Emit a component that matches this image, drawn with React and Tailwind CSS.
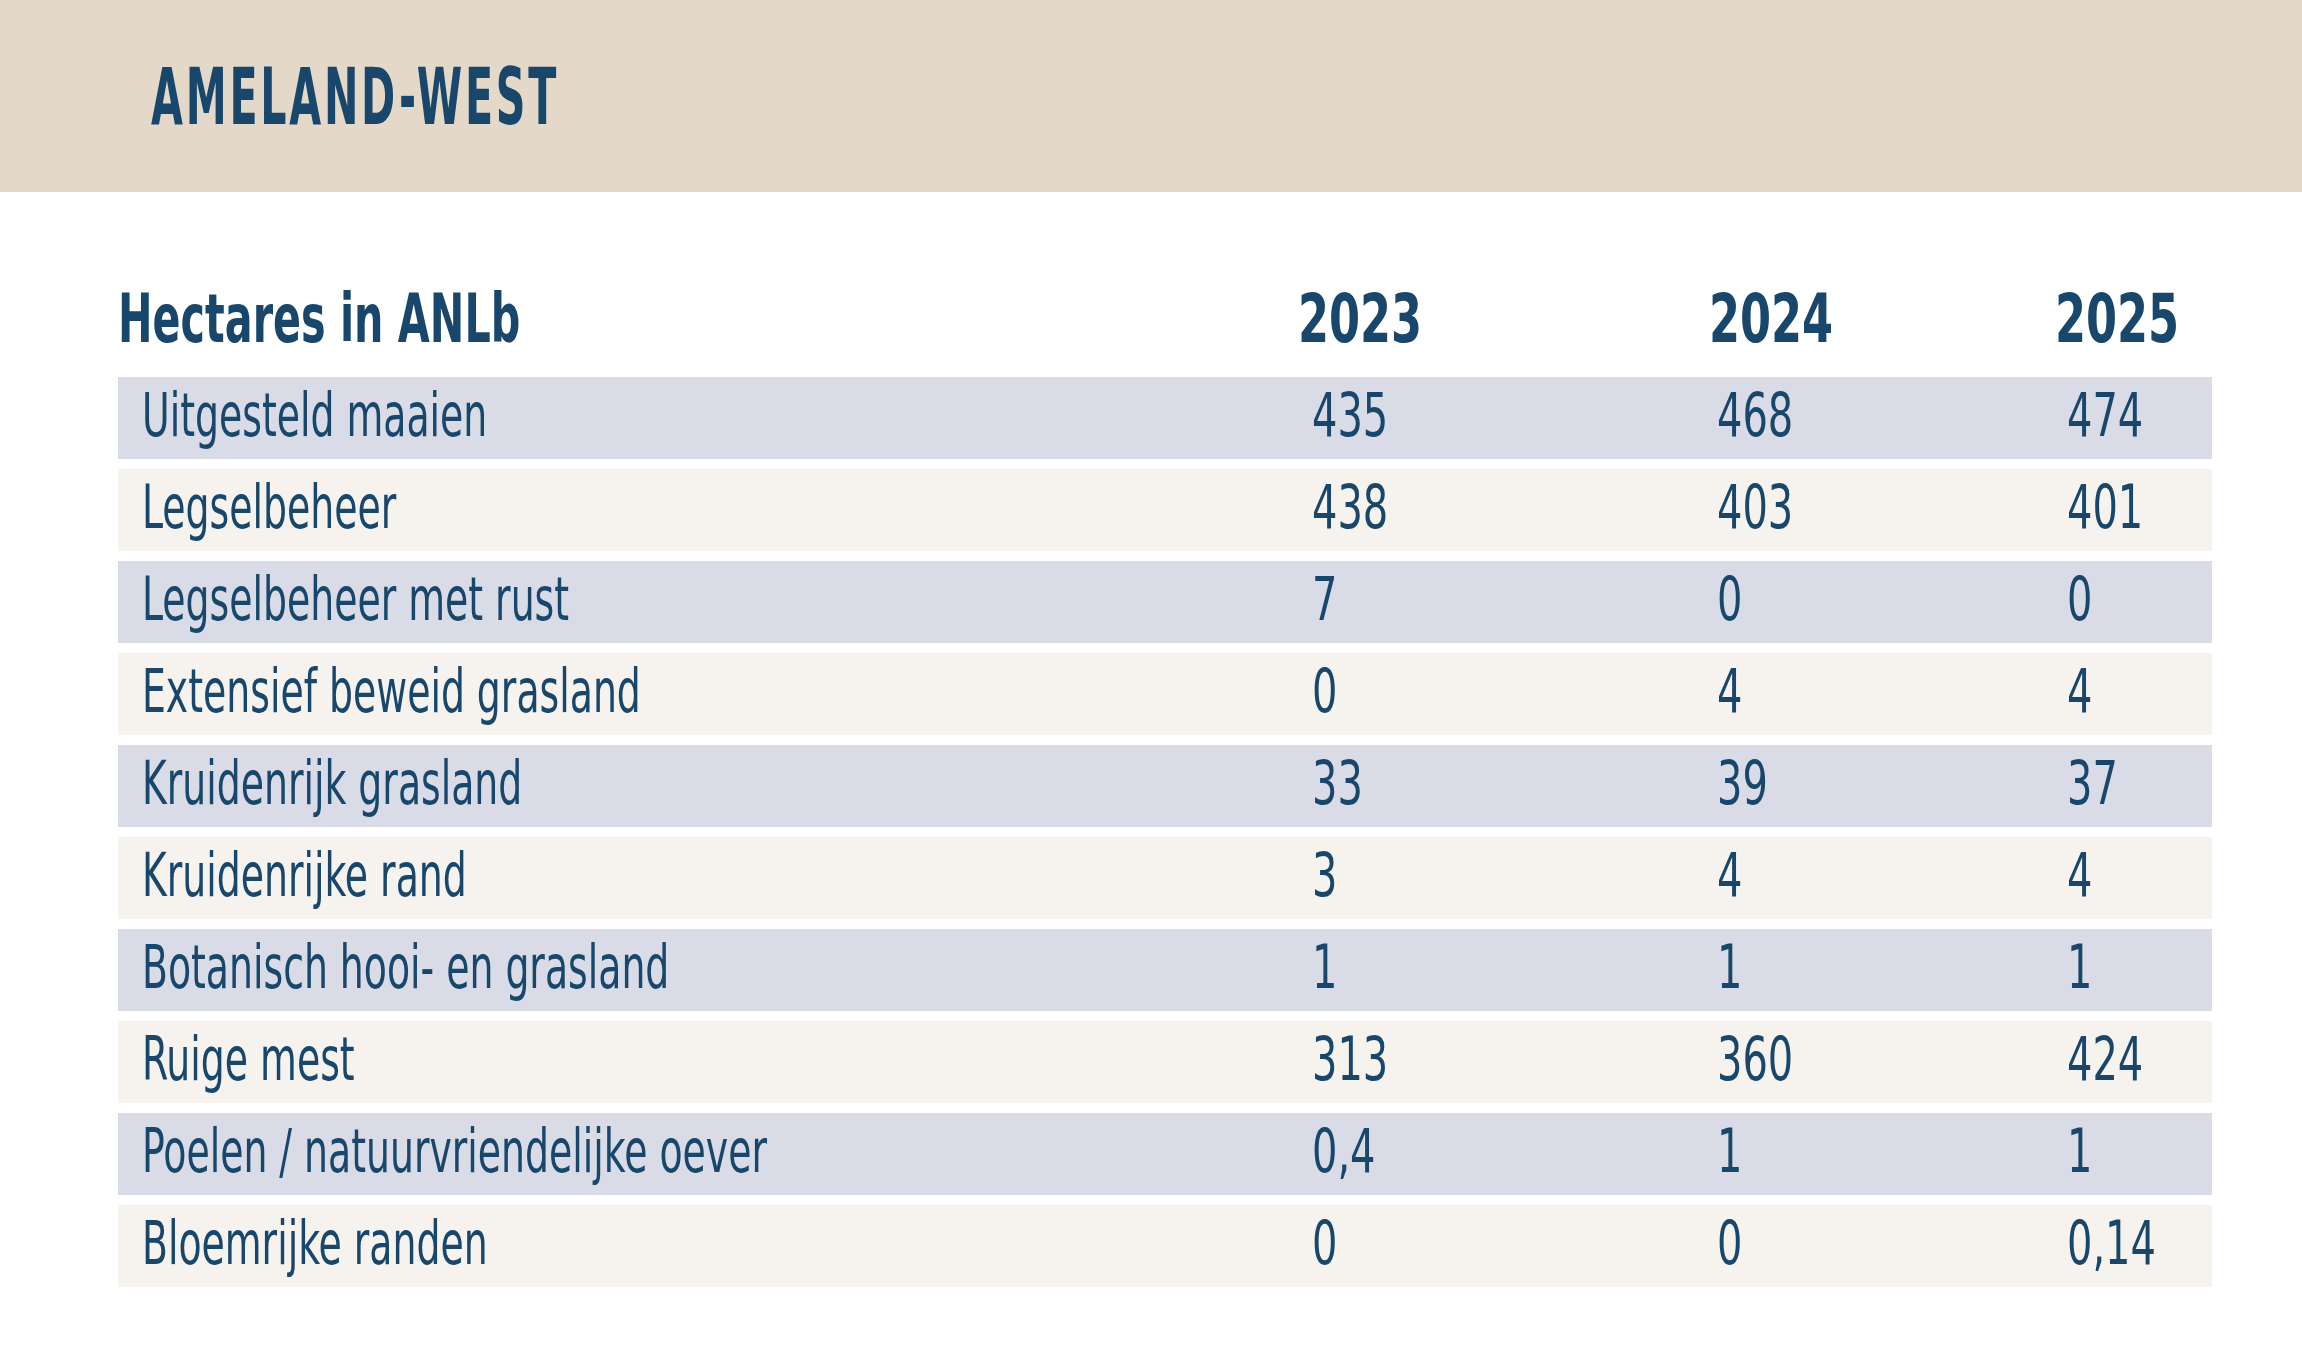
import React from 'react'

const rows = [
  { label: 'Uitgesteld maaien', values: ['435', '468', '474'] },
  { label: 'Legselbeheer', values: ['438', '403', '401'] },
  { label: 'Legselbeheer met rust', values: ['7', '0', '0'] },
  { label: 'Extensief beweid grasland', values: ['0', '4', '4'] },
  { label: 'Kruidenrijk grasland', values: ['33', '39', '37'] },
  { label: 'Kruidenrijke rand', values: ['3', '4', '4'] },
  { label: 'Botanisch hooi- en grasland', values: ['1', '1', '1'] },
  { label: 'Ruige mest', values: ['313', '360', '424'] },
  { label: 'Poelen / natuurvriendelijke oever', values: ['0,4', '1', '1'] },
  { label: 'Bloemrijke randen', values: ['0', '0', '0,14'] },
]

const years = ['2023', '2024', '2025']

// condensed look: the installed fonts are too wide, so squeeze horizontally
const Narrow = ({ children, className = '' }) => (
  <span className={`inline-block origin-left whitespace-nowrap ${className}`}>{children}</span>
)

const App = () => {
  return (
    <div
      className="w-[2302px] h-[1359px] bg-white text-[#18476b]"
      style={{ fontFamily: '"DejaVu Sans Condensed", "DejaVu Sans", sans-serif' }}
    >
      {/* Header band */}
      <div className="h-[192px] bg-[#e4d9c8] pl-[151px] pt-[58px]">
        <h1 className="text-[78px] leading-[78px] font-bold tracking-[0.06em]">
          <Narrow className="scale-x-[0.587]">AMELAND-WEST</Narrow>
        </h1>
      </div>

      <div className="pl-[118px] pr-[90px] pt-[94px]">
        {/* Table heading */}
        <div className="grid grid-cols-[1180px_411px_346px_1fr] text-[67px] leading-[67px] font-bold mb-[24px]">
          <Narrow className="scale-x-[0.685]">Hectares in ANLb</Narrow>
          {years.map((y) => (
            <Narrow key={y} className="scale-x-[0.74]">{y}</Narrow>
          ))}
        </div>

        {/* Rows */}
        <div className="flex flex-col gap-[10px]">
          {rows.map((row, i) => (
            <div
              key={row.label}
              className={`grid grid-cols-[1194px_405px_350px_1fr] h-[82px] pt-[8px] text-[60px] leading-[60px] ${
                i % 2 === 0 ? 'bg-[#d9dce6]' : 'bg-[#f6f3ef]'
              }`}
            >
              <div className="pl-[24px]">
                <Narrow className="scale-x-[0.70]">{row.label}</Narrow>
              </div>
              {row.values.map((v, j) => (
                <div key={j}>
                  <Narrow className="scale-x-[0.74]">{v}</Narrow>
                </div>
              ))}
            </div>
          ))}
        </div>
      </div>
    </div>
  )
}

export default App
